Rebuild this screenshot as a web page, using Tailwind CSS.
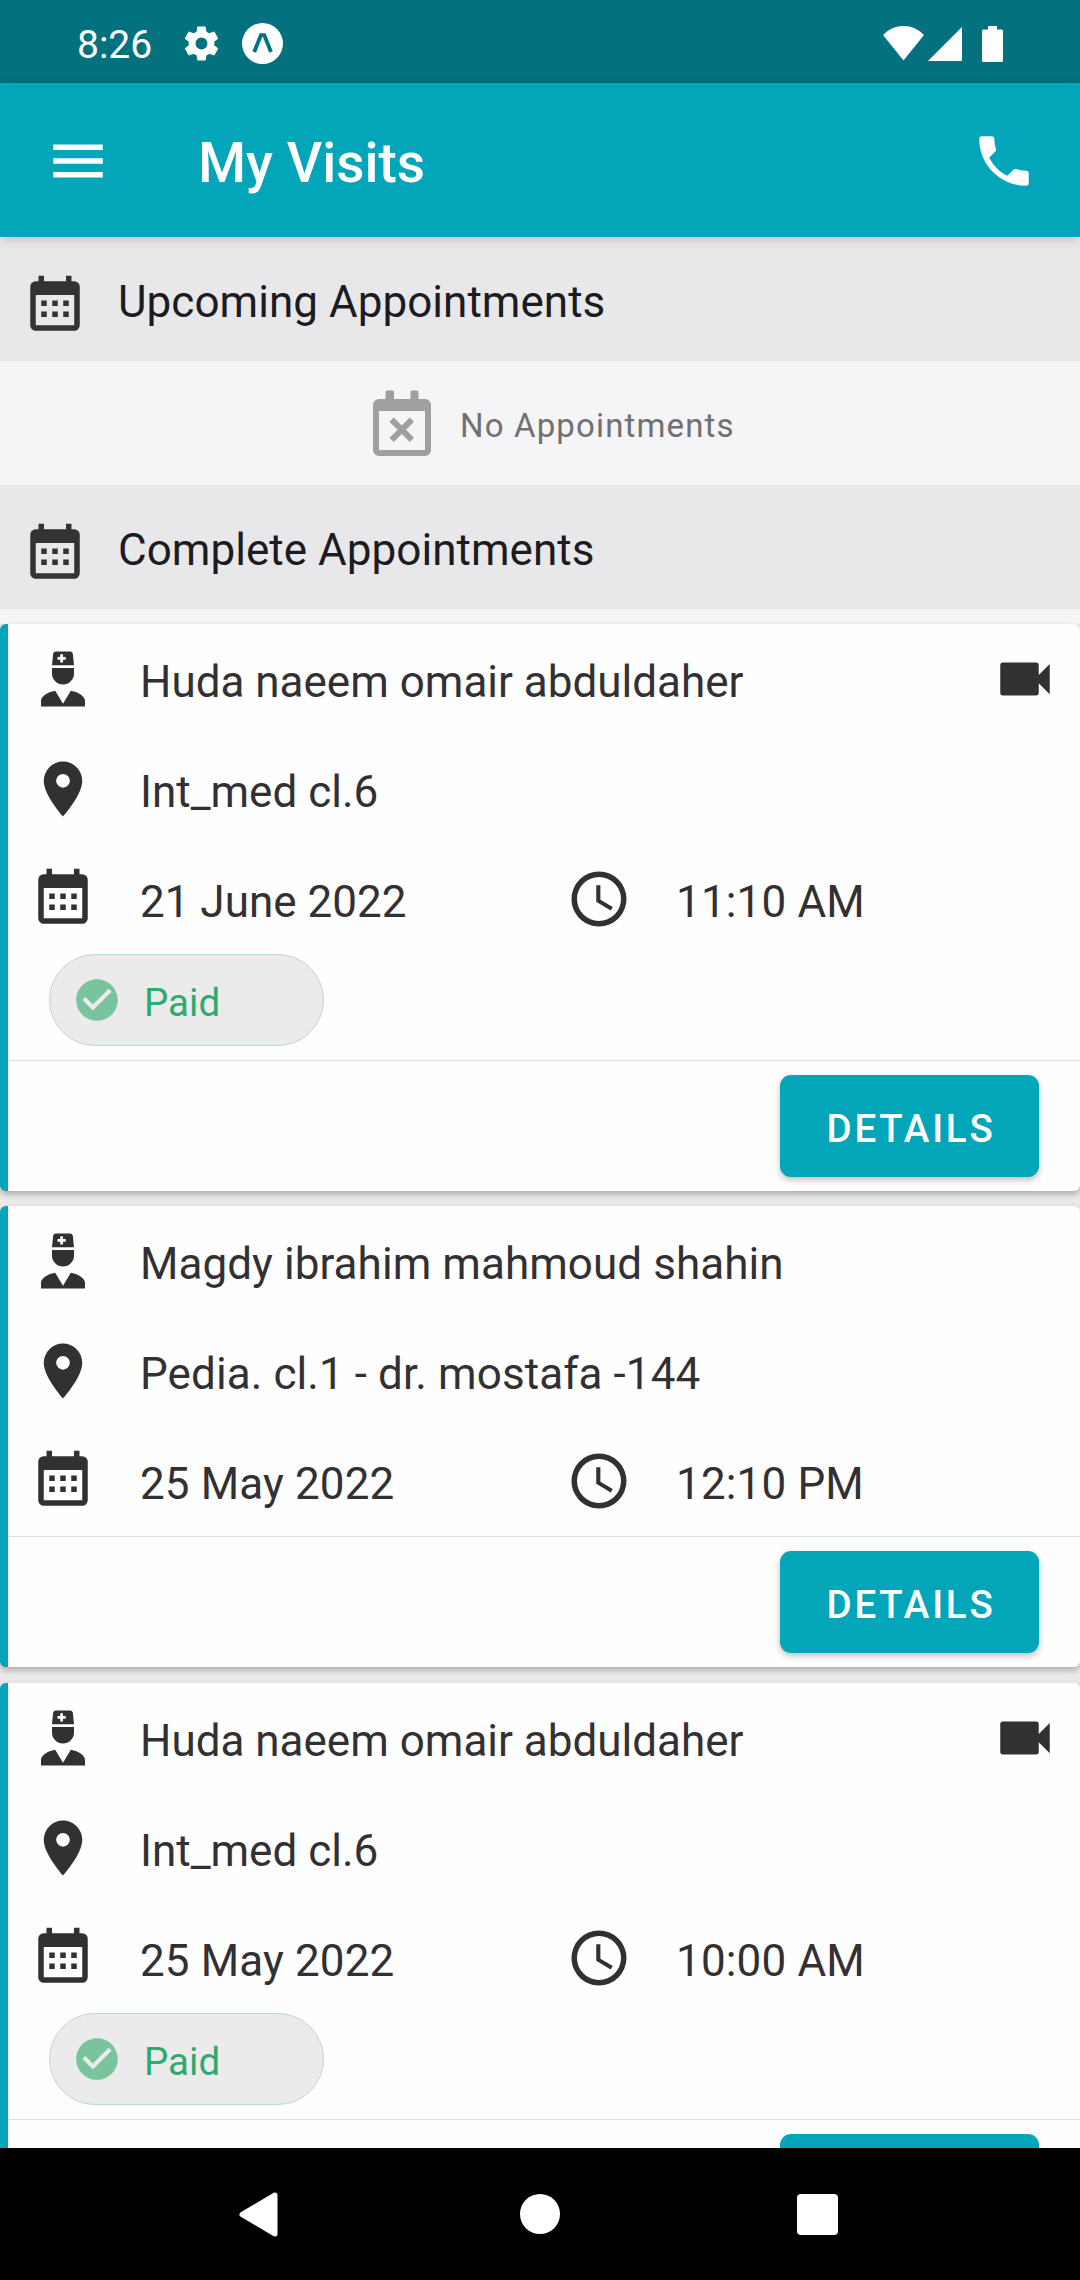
<!DOCTYPE html>
<html lang="en">
<head>
    <meta charset="UTF-8">
    <meta name="viewport" content="width=device-width, initial-scale=1.0">
    <title>My Visits</title>
    <script src="https://cdn.jsdelivr.net/npm/@tailwindcss/browser@4"></script>
</head>
<body class="bg-black">
    <!-- Icon definitions -->
    <svg class="hidden" xmlns="http://www.w3.org/2000/svg">
        <symbol id="calendar" viewBox="0 0 24 24"><path d="M9,10V12H7V10H9M13,10V12H11V10H13M17,10V12H15V10H17M19,3A2,2 0 0,1 21,5V19A2,2 0 0,1 19,21H5C3.89,21 3,20.1 3,19V5A2,2 0 0,1 5,3H6V1H8V3H16V1H18V3H19M19,19V8H5V19H19M9,14V16H7V14H9M13,14V16H11V14H13M17,14V16H15V14H17Z"/></symbol>
        <symbol id="doctor" viewBox="0 0 24 24"><path d="M14.84,16.26C17.86,16.83 20,18.29 20,20V22H4V20C4,18.29 6.14,16.83 9.16,16.26L12,21L14.84,16.26M8,8H16V10A4,4 0 0,1 12,14A4,4 0 0,1 8,10V8M8,7L8.41,2.9C8.46,2.39 8.89,2 9.41,2H14.6C15.11,2 15.54,2.39 15.59,2.9L16,7H8M12,3H11V4H10V5H11V6H12V5H13V4H12V3Z"/></symbol>
        <symbol id="marker" viewBox="0 0 24 24"><path d="M12,11.5A2.5,2.5 0 0,1 9.5,9A2.5,2.5 0 0,1 12,6.5A2.5,2.5 0 0,1 14.5,9A2.5,2.5 0 0,1 12,11.5M12,2A7,7 0 0,0 5,9C5,14.25 12,22 12,22C12,22 19,14.25 19,9A7,7 0 0,0 12,2Z"/></symbol>
        <symbol id="clock" viewBox="0 0 24 24"><path d="M12,20A8,8 0 0,0 20,12A8,8 0 0,0 12,4A8,8 0 0,0 4,12A8,8 0 0,0 12,20M12,2A10,10 0 0,1 22,12A10,10 0 0,1 12,22C6.47,22 2,17.5 2,12A10,10 0 0,1 12,2M12.5,7V12.25L17,14.92L16.25,16.15L11,13V7H12.5Z"/></symbol>
        <symbol id="video" viewBox="0 0 24 24"><path d="M17,10.5V7A1,1 0 0,0 16,6H4A1,1 0 0,0 3,7V17A1,1 0 0,0 4,18H16A1,1 0 0,0 17,17V13.5L21,17.5V6.5L17,10.5Z"/></symbol>
        <symbol id="check" viewBox="0 0 24 24"><path d="M12 2C6.5 2 2 6.5 2 12S6.5 22 12 22 22 17.5 22 12 17.5 2 12 2M10 17L5 12L6.41 10.59L10 14.17L17.59 6.58L19 8L10 17Z"/></symbol>
    </svg>

    <div class="flex h-[2280px] w-[1080px] flex-col overflow-hidden bg-[#f5f5f7] font-[Roboto,sans-serif] text-[44px] leading-[52px] text-[#333033]">
        <!-- Status bar -->
        <div class="flex h-[83px] shrink-0 items-center bg-[#03727e] pt-1 pr-[77px] pl-[77px] text-white">
            <span class="w-[104px] pt-0.5 text-[39px]">8:26</span>
            <svg class="size-[41px]" viewBox="0 0 24 24" fill="currentColor"><path d="M12,15.5A3.5,3.5 0 0,1 8.5,12A3.5,3.5 0 0,1 12,8.5A3.5,3.5 0 0,1 15.5,12A3.5,3.5 0 0,1 12,15.5M19.43,12.97C19.47,12.65 19.5,12.33 19.5,12C19.5,11.67 19.47,11.34 19.43,11L21.54,9.37C21.73,9.22 21.78,8.95 21.66,8.73L19.66,5.27C19.54,5.05 19.27,4.96 19.05,5.05L16.56,6.05C16.04,5.66 15.5,5.32 14.87,5.07L14.5,2.42C14.46,2.18 14.25,2 14,2H10C9.75,2 9.54,2.18 9.5,2.42L9.13,5.07C8.5,5.32 7.96,5.66 7.44,6.05L4.95,5.05C4.73,4.96 4.46,5.05 4.34,5.27L2.34,8.73C2.21,8.95 2.27,9.22 2.46,9.37L4.57,11C4.53,11.34 4.5,11.67 4.5,12C4.5,12.33 4.53,12.65 4.57,12.97L2.46,14.63C2.27,14.78 2.21,15.05 2.34,15.27L4.34,18.73C4.46,18.95 4.73,19.03 4.95,18.95L7.44,17.94C7.96,18.34 8.5,18.68 9.13,18.93L9.5,21.58C9.54,21.82 9.75,22 10,22H14C14.25,22 14.46,21.82 14.5,21.58L14.87,18.93C15.5,18.67 16.04,18.34 16.56,17.94L19.05,18.95C19.27,19.03 19.54,18.95 19.66,18.73L21.66,15.27C21.78,15.05 21.73,14.78 21.54,14.63L19.43,12.97Z"/></svg>
            <svg class="ml-5 size-[41px]" viewBox="0 0 41 41"><circle cx="20.5" cy="20.5" r="20.5" fill="#fff"/><path d="M12.2 29 18.9 12.2H22.3L29 29" fill="none" stroke="#03727e" stroke-width="3.8"/></svg>
            <svg class="ml-auto h-9 w-[120px]" viewBox="0 0 120 36" fill="currentColor"><path d="M0 9Q8.500 0 20.500 0T41 9L20.500 34.500ZM79 1V35H45ZM99 5a1.500 1.500 0 0 1 1.500-1.500H105V0h9v3.500h4.500a1.500 1.500 0 0 1 1.500 1.500V34.500a1.500 1.500 0 0 1-1.500 1.500H100.500a1.500 1.500 0 0 1-1.500-1.500Z"/></svg>
        </div>

        <!-- App bar -->
        <header class="z-10 flex h-[154px] shrink-0 items-center bg-[#03a5b9] pt-0.5 pr-[43px] pl-[45px] text-white shadow-[0_2px_10px_rgba(0,0,0,0.18)]">
            <svg class="size-[66px]" viewBox="0 0 24 24" fill="currentColor"><path d="M3,6H21V8H3V6M3,11H21V13H3V11M3,16H21V18H3V16Z"/></svg>
            <h1 class="ml-[87px] pt-1 text-[55px] leading-[64px] font-medium">My Visits</h1>
            <svg class="ml-auto size-[66px]" viewBox="0 0 24 24" fill="currentColor"><path d="M6.62,10.79C8.06,13.62 10.38,15.94 13.21,17.38L15.41,15.18C15.69,14.9 16.08,14.82 16.43,14.93C17.55,15.3 18.75,15.5 20,15.5A1,1 0 0,1 21,16.500V20A1,1 0 0,1 20,21A17,17 0 0,1 3,4A1,1 0 0,1 4,3H7.500A1,1 0 0,1 8.500,4C8.500,5.250 8.700,6.450 9.070,7.570C9.180,7.920 9.100,8.310 8.820,8.590L6.620,10.790Z"/></svg>
        </header>

        <main class="flex min-h-0 flex-1 flex-col overflow-hidden">
            <section class="flex h-[124px] shrink-0 items-center bg-[#e8e7e9] pl-[22px] text-[#1c1b1f]">
                <svg class="mt-3.5 size-[66px] fill-[#333333]"><use href="#calendar"/></svg>
                <h2 class="ml-[30px] pt-1.5 tracking-[0.04px]">Upcoming Appointments</h2>
            </section>
            <div class="flex h-[124px] shrink-0 items-center pl-[373px]">
                <svg class="h-[66px] w-[58px]" viewBox="0 0 58 66"><path fill="#9f9fa1" fill-rule="evenodd" d="M12.500 9V2a1.500 1.500 0 0 1 1.500-1.500h5.500A1.500 1.500 0 0 1 21 2v7h16.500V2A1.500 1.500 0 0 1 39 .500h5A1.500 1.500 0 0 1 45.500 2v7H52a6 6 0 0 1 6 6v45a6 6 0 0 1-6 6H6a6 6 0 0 1-6-6V15a6 6 0 0 1 6-6ZM6 21v39h46V21Z"/><path d="m19.500 30.500 18.500 18.500m0-18.500L19.500 49" stroke="#9f9fa1" stroke-width="7" stroke-linecap="square" stroke-linejoin="round" transform="translate(28.700 39.700) scale(.86) translate(-28.700 -39.700)"/></svg>
                <span class="ml-[29px] pt-1.5 text-[33px] leading-10 tracking-[1.15px] text-[#707072]">No Appointments</span>
            </div>
            <section class="mb-[15px] flex h-[124px] shrink-0 items-center bg-[#e8e7e9] pl-[22px] text-[#1c1b1f]">
                <svg class="mt-3.5 size-[66px] fill-[#333333]"><use href="#calendar"/></svg>
                <h2 class="ml-[30px] pt-1.5 tracking-[0.04px]">Complete Appointments</h2>
            </section>

            <div class="flex flex-col bg-[#ebe9ec]">
                <!-- Visit 1 -->
                <article class="mb-[15px] shrink-0 rounded-md border-l-8 border-[#03a5b9] bg-[#fefefe] shadow-[0_3px_6px_rgba(0,0,0,0.28)]">
                    <div class="flex h-[110px] items-center pr-[22px] pl-[22px]">
                        <svg class="size-[66px] fill-[#333033]"><use href="#doctor"/></svg>
                        <span class="ml-11 pt-1.5">Huda naeem omair abduldaher</span>
                        <svg class="ml-auto size-[66px] fill-[#333033]"><use href="#video"/></svg>
                    </div>
                    <div class="flex h-[110px] items-center pl-[22px]">
                        <svg class="size-[66px] fill-[#333033]"><use href="#marker"/></svg>
                        <span class="ml-11 pt-1.5">Int_med cl.6</span>
                    </div>
                    <div class="flex h-[110px] items-center pl-[22px]">
                        <svg class="size-[66px] fill-[#333033]"><use href="#calendar"/></svg>
                        <span class="ml-11 w-[426px] pt-1.5">21 June 2022</span>
                        <svg class="size-[66px] fill-[#333033]"><use href="#clock"/></svg>
                        <span class="ml-11 pt-1.5 tracking-[0.15px]">11:10 AM</span>
                    </div>
                    <div class="mb-3.5 ml-[41px] flex h-[92px] w-[275px] items-center rounded-full border border-[#b5dcd8] bg-[#ecebec] pl-[22px]">
                        <svg class="size-[50px] fill-[#79c49c]"><use href="#check"/></svg>
                        <span class="ml-[22px] pt-1.5 text-[38.5px] leading-[46px] text-[#2eaa6e]">Paid</span>
                    </div>
                    <div class="flex justify-end border-t border-[#dcdfe0] py-3.5 pr-[41px]">
                        <button class="h-[102px] w-[259px] rounded-[11px] bg-[#03a5b9] pt-1.5 pl-[3px] text-[38.5px] font-medium tracking-[2.8px] text-white shadow-[0_3px_6px_rgba(0,0,0,0.25)]">DETAILS</button>
                    </div>
                </article>

                <!-- Visit 2 -->
                <article class="mb-4 shrink-0 rounded-md border-l-8 border-[#03a5b9] bg-[#fefefe] shadow-[0_3px_6px_rgba(0,0,0,0.28)]">
                    <div class="flex h-[110px] items-center pl-[22px]">
                        <svg class="size-[66px] fill-[#333033]"><use href="#doctor"/></svg>
                        <span class="ml-11 pt-1.5 tracking-[0.06px]">Magdy ibrahim mahmoud shahin</span>
                    </div>
                    <div class="flex h-[110px] items-center pl-[22px]">
                        <svg class="size-[66px] fill-[#333033]"><use href="#marker"/></svg>
                        <span class="ml-11 pt-1.5 tracking-[0.09px]">Pedia. cl.1 - dr. mostafa -144</span>
                    </div>
                    <div class="flex h-[110px] items-center pl-[22px]">
                        <svg class="size-[66px] fill-[#333033]"><use href="#calendar"/></svg>
                        <span class="ml-11 w-[426px] pt-1.5 tracking-[0.12px]">25 May 2022</span>
                        <svg class="size-[66px] fill-[#333033]"><use href="#clock"/></svg>
                        <span class="ml-11 pt-1.5 tracking-[0.15px]">12:10 PM</span>
                    </div>
                    <div class="flex justify-end border-t border-[#dcdfe0] py-3.5 pr-[41px]">
                        <button class="h-[102px] w-[259px] rounded-[11px] bg-[#03a5b9] pt-1.5 pl-[3px] text-[38.5px] font-medium tracking-[2.8px] text-white shadow-[0_3px_6px_rgba(0,0,0,0.25)]">DETAILS</button>
                    </div>
                </article>

                <!-- Visit 3 -->
                <article class="shrink-0 rounded-t-md border-l-8 border-[#03a5b9] bg-[#fefefe] shadow-[0_3px_6px_rgba(0,0,0,0.28)]">
                    <div class="flex h-[110px] items-center pr-[22px] pl-[22px]">
                        <svg class="size-[66px] fill-[#333033]"><use href="#doctor"/></svg>
                        <span class="ml-11 pt-1.5">Huda naeem omair abduldaher</span>
                        <svg class="ml-auto size-[66px] fill-[#333033]"><use href="#video"/></svg>
                    </div>
                    <div class="flex h-[110px] items-center pl-[22px]">
                        <svg class="size-[66px] fill-[#333033]"><use href="#marker"/></svg>
                        <span class="ml-11 pt-1.5">Int_med cl.6</span>
                    </div>
                    <div class="flex h-[110px] items-center pl-[22px]">
                        <svg class="size-[66px] fill-[#333033]"><use href="#calendar"/></svg>
                        <span class="ml-11 w-[426px] pt-1.5 tracking-[0.12px]">25 May 2022</span>
                        <svg class="size-[66px] fill-[#333033]"><use href="#clock"/></svg>
                        <span class="ml-11 pt-1.5 tracking-[0.15px]">10:00 AM</span>
                    </div>
                    <div class="mb-3.5 ml-[41px] flex h-[92px] w-[275px] items-center rounded-full border border-[#b5dcd8] bg-[#ecebec] pl-[22px]">
                        <svg class="size-[50px] fill-[#79c49c]"><use href="#check"/></svg>
                        <span class="ml-[22px] pt-1.5 text-[38.5px] leading-[46px] text-[#2eaa6e]">Paid</span>
                    </div>
                    <div class="flex justify-end border-t border-[#dcdfe0] pt-3.5 pr-[41px]">
                        <button class="h-3.5 w-[259px] rounded-t-[11px] bg-[#03a5b9]"></button>
                    </div>
                </article>
            </div>
        </main>

        <!-- Navigation bar -->
        <nav class="z-10 flex h-[132px] shrink-0 items-center bg-black pl-[239px]">
            <svg class="h-[45px] w-[39px]" viewBox="0 0 39 45"><path d="M3 22.500 36 3V42Z" fill="#fff" stroke="#fff" stroke-width="5" stroke-linejoin="round"/></svg>
            <div class="ml-[242px] size-10 rounded-full bg-white"></div>
            <div class="ml-[237px] size-[41px] rounded-[4px] bg-white"></div>
        </nav>
    </div>
</body>
</html>
